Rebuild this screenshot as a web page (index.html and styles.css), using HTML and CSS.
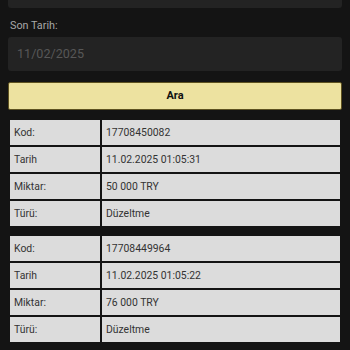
FILE: index.html
```html
<!DOCTYPE html>
<html>
<head>
<meta charset="utf-8">
<link rel="stylesheet" href="styles.css">
</head>
<body>
<div class="page">
  <div class="input-tail"></div>
  <div class="label">Son Tarih:</div>
  <div class="input">11/02/2025</div>
  <div class="btn">Ara</div>
  <table class="rec">
    <tr><td class="k">Kod:</td><td>17708450082</td></tr>
    <tr><td class="k">Tarih</td><td>11.02.2025 01:05:31</td></tr>
    <tr><td class="k">Miktar:</td><td>50 000 TRY</td></tr>
    <tr><td class="k">Türü:</td><td>Düzeltme</td></tr>
  </table>
  <table class="rec">
    <tr><td class="k">Kod:</td><td>17708449964</td></tr>
    <tr><td class="k">Tarih</td><td>11.02.2025 01:05:22</td></tr>
    <tr><td class="k">Miktar:</td><td>76 000 TRY</td></tr>
    <tr><td class="k">Türü:</td><td>Düzeltme</td></tr>
  </table>
</div>
</body>
</html>
```
FILE: styles.css
```css
html, body {
  margin: 0;
  padding: 0;
  background: #141414;
  font-family: Roboto, "Liberation Sans", sans-serif;
}
.page {
  padding: 0 8px;
  display: flex;
  flex-direction: column;
}
.input-tail {
  height: 8px;
  background: #232323;
  border-radius: 0 0 3px 3px;
}
.label {
  margin-top: 10px;
  height: 16px;
  line-height: 16px;
  font-size: 10.8px;
  color: #a8a8a8;
  padding-left: 2px;
}
.input {
  margin-top: 3px;
  height: 34px;
  line-height: 34px;
  background: #232323;
  border-radius: 3px;
  padding-left: 9px;
  font-size: 12.6px;
  color: #575757;
}
.btn {
  margin-top: 11px;
  height: 26px;
  line-height: 26px;
  background: #ede2a0;
  border: 1px solid #5e5220;
  border-radius: 2px;
  text-align: center;
  font-weight: bold;
  font-size: 11px;
  color: #111;
}
.rec {
  border-collapse: separate;
  border-spacing: 2px;
  width: 100%;
  margin-top: 8px;
}
.rec + .rec {
  margin-top: 6px;
}
.rec td {
  background: #dcdcdc;
  height: 25px;
  padding: 0 0 0 4px;
  font-size: 10.4px;
  color: #333;
  line-height: 25px;
}
.rec td.k {
  width: 86px;
}
```
